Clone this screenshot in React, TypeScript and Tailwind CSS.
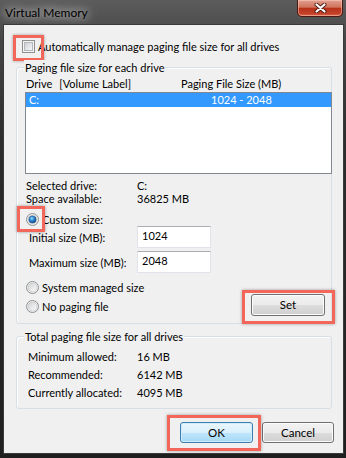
import React from "react";

const infoRows = [
  { label: "Minimum allowed:", value: "16 MB" },
  { label: "Recommended:", value: "6142 MB" },
  { label: "Currently allocated:", value: "4095 MB" },
];

// red annotation frame drawn over a control
function Mark({ className }: { className: string }) {
  return (
    <span
      className={`pointer-events-none absolute border-[3px] border-[#f3665a] shadow-[0_0_3px_rgba(0,0,0,0.35)] ${className}`}
    />
  );
}

function Radio({ checked }: { checked?: boolean }) {
  return (
    <svg width="13" height="13" viewBox="0 0 13 13" className="shrink-0">
      <defs>
        <linearGradient id="rbg" x1="0" y1="0" x2="1" y2="1">
          <stop offset="0" stopColor="#cfd1d4" />
          <stop offset="1" stopColor="#fdfdfd" />
        </linearGradient>
        <radialGradient id="rdot" cx="0.4" cy="0.35" r="0.7">
          <stop offset="0" stopColor="#9fdcff" />
          <stop offset="0.45" stopColor="#2a8ad6" />
          <stop offset="1" stopColor="#0d3f78" />
        </radialGradient>
      </defs>
      <circle cx="6.5" cy="6.5" r="6" fill="#f4f4f4" stroke="#8e8f8f" />
      <circle cx="6.5" cy="6.5" r="4.5" fill="url(#rbg)" stroke="#b9bcc0" strokeWidth="0.6" />
      {checked && <circle cx="6.5" cy="6.5" r="3.6" fill="url(#rdot)" stroke="#10427a" strokeWidth="0.5" />}
    </svg>
  );
}

function WinButton({ label, primary, className }: { label: string; primary?: boolean; className: string }) {
  return (
    <button
      className={`${className} rounded-[3px] border font-['Lato',sans-serif] text-[11.5px] leading-none text-black ${
        primary
          ? "border-[#3c7fb1] bg-[linear-gradient(#eaf6fd_0%,#d9f0fc_50%,#bee6fd_50%,#a7d9f5_100%)] shadow-[inset_0_0_0_1px_#d0ecfb]"
          : "border-[#707070] bg-[linear-gradient(#f2f2f2_0%,#ebebeb_50%,#dddddd_50%,#cfcfcf_100%)] shadow-[inset_0_0_0_1px_#fcfcfc]"
      }`}
    >
      {label}
    </button>
  );
}

export default function App() {
  return (
    <div className="flex h-[458px] w-[346px] flex-col whitespace-nowrap bg-[linear-gradient(180deg,#5c5c5c_0px,#464646_40px,#2d2d2d_140px,#1f1f1f_100%)] font-['Lato',sans-serif] text-[11px] text-black">
      {/* Title bar */}
      <div className="flex h-[25px] shrink-0 items-start justify-between">
        <span className="ml-[5px] mt-[5px] text-[12px] leading-[16px] [text-shadow:0_0_8px_rgba(255,255,255,0.9),0_0_14px_rgba(255,255,255,0.7)]">
          Virtual Memory
        </span>
        <button className="mr-[3px] flex h-[17px] w-[46px] items-center justify-center rounded-b-[5px] border border-t-0 border-[#4a1810] bg-[linear-gradient(180deg,#e2a090_0%,#d0725b_45%,#b8321a_52%,#c3402a_85%,#de6a48_100%)] shadow-[inset_0_0_0_1px_rgba(255,210,200,0.5)]">
          <svg width="13" height="10" viewBox="0 0 13 10">
            <path d="M2.5 1.5 L10.5 8.5 M10.5 1.5 L2.5 8.5" stroke="#4b1a12" strokeWidth="4" strokeLinecap="round" />
            <path d="M2.5 1.5 L10.5 8.5 M10.5 1.5 L2.5 8.5" stroke="#ffffff" strokeWidth="2.2" strokeLinecap="round" />
          </svg>
        </button>
      </div>

      {/* Client area */}
      <div className="mb-[5px] ml-[4px] mr-[3px] flex flex-1 flex-col bg-[#f0f0f0] shadow-[0_0_0_1px_#3a3a3a]">
        <div className="ml-[18px] mt-[15px] flex h-[13px] items-center gap-[3px]">
          <span className="relative flex h-[13px] w-[13px] shrink-0 items-center justify-center border border-[#8e8f8f] bg-[#f4f4f4]">
            <span className="h-[9px] w-[9px] border border-[#b3b7bb] bg-[linear-gradient(135deg,#cbcfd5,#f7f7f7)]" />
            <Mark className="-left-[10px] -top-[6px] h-[26px] w-[31px]" />
          </span>
          <span className="leading-[15px]">Automatically manage paging file size for all drives</span>
        </div>

        {/* Paging file size for each drive */}
        <div className="relative ml-[12px] mt-[14px] flex w-[316px] flex-col rounded-[3px] border border-[#d5dfe5] pb-[7px] shadow-[inset_1px_1px_0_#fff]">
          <span className="absolute left-[7px] top-[-8px] bg-[#f0f0f0] px-[1px] leading-[15px]">Paging file size for each drive</span>

          <div className="mt-[8px] flex pl-[9px] leading-[15px]">
            <span className="w-[155px]">
              Drive<span className="ml-[7px]">[Volume Label]</span>
            </span>
            <span>Paging File Size (MB)</span>
          </div>

          <div className="-mr-px ml-[8px] mt-[1px] h-[82px] border border-[#828790] bg-white">
            <div className="flex h-[14px] bg-[#3399ff] pl-[3px] leading-[14px] text-white">
              <span className="w-[182px]">C:</span>
              <span>1024 - 2048</span>
            </div>
          </div>

          <div className="mt-[5px] flex h-[13px] pl-[9px] leading-[13px]">
            <span className="w-[111px]">Selected drive:</span>
            <span>C:</span>
          </div>
          <div className="flex h-[13px] pl-[9px] leading-[13px]">
            <span className="w-[111px]">Space available:</span>
            <span>36825 MB</span>
          </div>

          <div className="mt-[7px] flex h-[15px] items-center gap-[3px] pl-[9px] leading-[15px]">
            <span className="relative flex">
              <Radio checked />
              <Mark className="-left-[9px] -top-[7px] h-[26px] w-[28px]" />
            </span>
            <span>Custom size:</span>
          </div>

          <div className="-mt-px flex h-[22px] items-start pl-[12px]">
            <span className="mt-[4px] w-[108px] leading-[15px]">Initial size (MB):</span>
            <input
              readOnly
              value="1024"
              className="h-[22px] w-[74px] border border-[#e2e3ea] border-t-[#abadb3] bg-white pb-[3px] pl-[4px] font-['Lato',sans-serif] text-[11px] text-black outline-none"
            />
          </div>
          <div className="mt-[3px] flex h-[22px] items-start pl-[12px]">
            <span className="mt-[4px] w-[108px] leading-[15px]">Maximum size (MB):</span>
            <input
              readOnly
              value="2048"
              className="h-[22px] w-[74px] border border-[#e2e3ea] border-t-[#abadb3] bg-white pb-[3px] pl-[4px] font-['Lato',sans-serif] text-[11px] text-black outline-none"
            />
          </div>

          <div className="mt-[7px] flex items-start">
            <div className="flex flex-col gap-[4px] pl-[9px]">
              <div className="flex h-[15px] items-center gap-[3px] leading-[15px]">
                <Radio />
                <span>System managed size</span>
              </div>
              <div className="flex h-[15px] items-center gap-[3px] leading-[15px]">
                <Radio />
                <span>No paging file</span>
              </div>
            </div>
            <span className="relative ml-auto mr-[6px] mt-[14px] flex">
              <WinButton label="Set" className="h-[22px] w-[74px]" />
              <Mark className="-left-[9px] -top-[4px] h-[34px] w-[93px]" />
            </span>
          </div>
        </div>

        {/* Total paging file size for all drives */}
        <div className="relative ml-[12px] mt-[12px] flex w-[316px] flex-col rounded-[3px] border border-[#d5dfe5] pb-[7px] pt-[10px] shadow-[inset_1px_1px_0_#fff]">
          <span className="absolute left-[7px] top-[-8px] bg-[#f0f0f0] px-[1px] leading-[15px]">
            Total paging file size for all drives
          </span>
          {infoRows.map((r) => (
            <div key={r.label} className="flex h-[18px] items-center pl-[11px] leading-[15px]">
              <span className="w-[109px]">{r.label}</span>
              <span>{r.value}</span>
            </div>
          ))}
        </div>

        <div className="mr-[9px] mt-[13px] flex justify-end gap-[9px]">
          <span className="relative flex">
            <WinButton label="OK" primary className="h-[21px] w-[73px]" />
            <Mark className="-left-[13px] -top-[7px] h-[36px] w-[94px]" />
          </span>
          <WinButton label="Cancel" className="h-[21px] w-[72px]" />
        </div>
      </div>
    </div>
  );
}
